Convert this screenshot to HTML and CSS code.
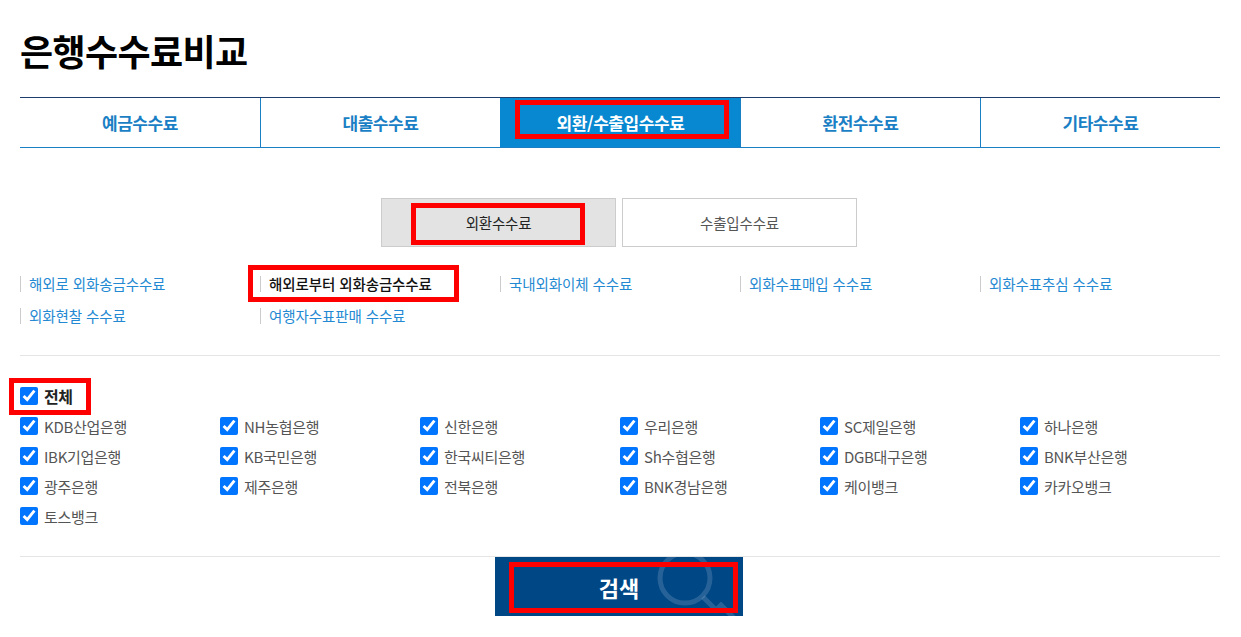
FILE: index.html
```html
<!DOCTYPE html>
<html lang="ko">
<head>
<meta charset="utf-8">
<title>은행수수료비교</title>
<link rel="stylesheet" href="styles.css">
</head>
<body>
<div class="page">
  <h1 class="title">은행수수료비교</h1>

  <nav class="tabs">
    <a class="tab">예금수수료</a>
    <a class="tab">대출수수료</a>
    <a class="tab active">외환/수출입수수료<span class="mark mark-tab"></span></a>
    <a class="tab">환전수수료</a>
    <a class="tab">기타수수료</a>
  </nav>

  <div class="toggle">
    <a class="toggle-btn on">외환수수료<span class="mark mark-toggle"></span></a>
    <a class="toggle-btn">수출입수수료</a>
  </div>

  <ul class="links">
    <li class="link-item"><a class="link">해외로 외화송금수수료</a></li>
    <li class="link-item"><a class="link current">해외로부터 외화송금수수료</a><span class="mark mark-link"></span></li>
    <li class="link-item"><a class="link">국내외화이체 수수료</a></li>
    <li class="link-item"><a class="link">외화수표매입 수수료</a></li>
    <li class="link-item"><a class="link">외화수표추심 수수료</a></li>
    <li class="link-item"><a class="link">외화현찰 수수료</a></li>
    <li class="link-item"><a class="link">여행자수표판매 수수료</a></li>
  </ul>

  <div class="divider divider-top"></div>

  <div class="checks">
    <label class="check all"><input type="checkbox" checked><span>전체</span><span class="mark mark-all"></span></label>
    <div class="check-grid">
      <label class="check"><input type="checkbox" checked><span>KDB산업은행</span></label>
      <label class="check"><input type="checkbox" checked><span>NH농협은행</span></label>
      <label class="check"><input type="checkbox" checked><span>신한은행</span></label>
      <label class="check"><input type="checkbox" checked><span>우리은행</span></label>
      <label class="check"><input type="checkbox" checked><span>SC제일은행</span></label>
      <label class="check"><input type="checkbox" checked><span>하나은행</span></label>
      <label class="check"><input type="checkbox" checked><span>IBK기업은행</span></label>
      <label class="check"><input type="checkbox" checked><span>KB국민은행</span></label>
      <label class="check"><input type="checkbox" checked><span>한국씨티은행</span></label>
      <label class="check"><input type="checkbox" checked><span>Sh수협은행</span></label>
      <label class="check"><input type="checkbox" checked><span>DGB대구은행</span></label>
      <label class="check"><input type="checkbox" checked><span>BNK부산은행</span></label>
      <label class="check"><input type="checkbox" checked><span>광주은행</span></label>
      <label class="check"><input type="checkbox" checked><span>제주은행</span></label>
      <label class="check"><input type="checkbox" checked><span>전북은행</span></label>
      <label class="check"><input type="checkbox" checked><span>BNK경남은행</span></label>
      <label class="check"><input type="checkbox" checked><span>케이뱅크</span></label>
      <label class="check"><input type="checkbox" checked><span>카카오뱅크</span></label>
      <label class="check"><input type="checkbox" checked><span>토스뱅크</span></label>
    </div>
  </div>

  <div class="divider divider-bottom"></div>

  <button class="search" type="button">
    <svg class="search-deco" width="248" height="59" viewBox="0 0 248 59" aria-hidden="true">
      <circle cx="190" cy="21" r="25" fill="none" stroke="rgba(255,255,255,0.15)" stroke-width="5"/>
      <path d="M208 40 L221 53 L226 48 L244 66" fill="none" stroke="rgba(255,255,255,0.15)" stroke-width="5"/>
    </svg>
    <span class="search-label">검색</span>
    <span class="mark mark-search"></span>
  </button>
</div>
</body>
</html>
```

FILE: styles.css
```css
* { box-sizing: border-box; }

html, body {
  margin: 0;
  padding: 0;
  background: #fff;
}

body {
  font-family: "Noto Sans CJK KR", "Noto Sans", sans-serif;
  color: #333;
}

.page {
  width: 1200px;
  margin-left: 20px;
  padding-top: 25px;
}

.title {
  margin: 0;
  font-size: 36px;
  line-height: 50px;
  font-weight: 700;
  color: #000;
  letter-spacing: -0.6px;
}

/* red annotation boxes */
.mark {
  position: absolute;
  border: 5px solid #ff0000;
  pointer-events: none;
}

/* tabs */
.tabs {
  margin-top: 22px;
  display: grid;
  grid-template-columns: repeat(5, 240px);
  border-top: 1px solid #1d3e6c;
  border-bottom: 1px solid #1a7fc4;
}

.tab {
  position: relative;
  height: 49px;
  display: flex;
  align-items: center;
  justify-content: center;
  font-size: 17px;
  font-weight: 700;
  letter-spacing: -0.4px;
  color: #1a7fc4;
  border-left: 1px solid #1a7fc4;
}

.tab:first-child { border-left: 0; }

.tab.active {
  background: #0788d0;
  color: #fff;
  border-left-color: #0788d0;
}

.mark-tab {
  left: 14px;
  top: 2px;
  width: 214px;
  height: 39px;
}

/* toggle */
.toggle {
  margin-top: 50px;
  display: flex;
  justify-content: center;
  gap: 6px;
  padding-right: 2px;
}

.toggle-btn {
  position: relative;
  width: 235px;
  height: 49px;
  display: flex;
  align-items: center;
  justify-content: center;
  border: 1px solid #cccccc;
  font-size: 14.5px;
  color: #555;
  letter-spacing: -0.2px;
}

.toggle-btn.on {
  background: #e3e3e3;
  color: #222;
}

.mark-toggle {
  left: 29px;
  top: 4px;
  width: 174px;
  height: 42px;
}

/* sub links */
.links {
  list-style: none;
  margin: 21px 0 0;
  padding: 0;
  display: grid;
  grid-template-columns: repeat(5, 240px);
}

.link-item {
  position: relative;
  height: 32px;
  display: flex;
  align-items: center;
}

.link {
  display: block;
  border-left: 1px solid #cccccc;
  padding-left: 8px;
  line-height: 16px;
  font-size: 14.5px;
  letter-spacing: -0.1px;
  color: #2389d2;
}

.link.current {
  color: #111;
  font-weight: 500;
}

.mark-link {
  left: -12px;
  top: -3px;
  width: 211px;
  height: 37px;
}

/* dividers */
.divider {
  height: 1px;
  background: #e5e5e5;
}

.divider-top { margin-top: 23px; }
.divider-bottom { margin-top: 25px; }

/* checkboxes */
.checks {
  margin-top: 25px;
}

.check {
  position: relative;
  height: 30px;
  display: flex;
  align-items: center;
  gap: 6px;
  font-size: 15px;
  letter-spacing: -0.3px;
  color: #555;
}

.check input {
  width: 18px;
  height: 18px;
  margin: 0;
  accent-color: #0075ff;
  flex: none;
}

.check.all {
  width: 70px;
  font-size: 16px;
  font-weight: 700;
  letter-spacing: -0.5px;
  color: #222;
}

.mark-all {
  left: -11px;
  top: -3px;
  width: 82px;
  height: 37px;
}

.check-grid {
  display: grid;
  grid-template-columns: repeat(6, 200px);
}

/* search button */
.search {
  position: relative;
  display: flex;
  align-items: center;
  justify-content: center;
  width: 248px;
  height: 59px;
  margin: 0 0 0 475px;
  padding: 0;
  border: 0;
  background: #004785;
  overflow: hidden;
  font-family: inherit;
}

.search-deco {
  position: absolute;
  left: 0;
  top: 0;
}

.search-label {
  position: relative;
  font-size: 22px;
  font-weight: 700;
  color: #fff;
  letter-spacing: 0;
}

.mark-search {
  left: 14px;
  top: 5px;
  width: 229px;
  height: 51px;
}
```
